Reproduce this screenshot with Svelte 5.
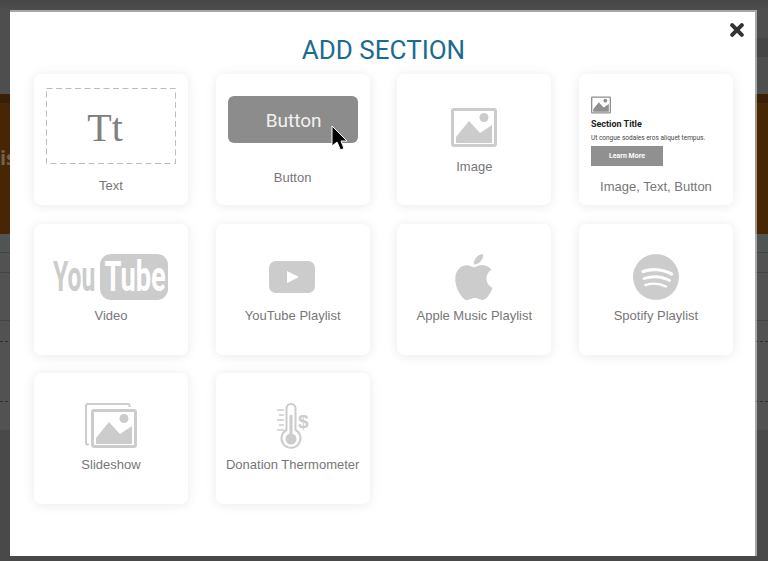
<script>
    const applePath =
        "M18.71 19.5C17.88 20.74 17 21.95 15.66 21.97C14.32 22 13.89 21.18 12.37 21.18C10.84 21.18 10.37 21.95 9.1 22C7.79 22.05 6.8 20.68 5.96 19.47C4.25 17 2.94 12.45 4.7 9.39C5.57 7.87 7.13 6.91 8.82 6.88C10.1 6.86 11.32 7.75 12.11 7.75C12.89 7.75 14.37 6.68 15.92 6.84C16.57 6.87 18.39 7.1 19.56 8.82C19.47 8.88 17.39 10.1 17.41 12.63C17.44 15.65 20.06 16.66 20.09 16.67C20.06 16.74 19.67 18.11 18.71 19.5M13 3.5C13.73 2.67 14.94 2.04 15.94 2C16.07 3.17 15.6 4.35 14.9 5.19C14.21 6.04 13.07 6.7 11.95 6.61C11.8 5.46 12.36 4.26 13 3.5Z";
</script>

{#snippet picture(color)}
    <rect x="1.5" y="1.5" width="43" height="36" rx="1.5" fill="none" stroke={color} stroke-width="3" />
    <path d="M5 35V29L18 13L29 25L41 17V35Z" fill={color} />
    <circle cx="33" cy="9.5" r="4.5" fill={color} />
{/snippet}

<div class="page">
    <div class="bg-top">
        <div class="bg-stripe"></div>
    </div>
    <div class="bg-hero">
        <div class="bg-hero-head"></div>
        <div class="bg-hero-text">is</div>
    </div>
    <div class="bg-rows">
        <div class="bg-row r1"></div>
        <div class="bg-row r2"></div>
        <div class="bg-row r3"></div>
        <div class="bg-row r4 dashed"></div>
        <div class="bg-row r5 dashed"></div>
        <div class="bg-row r6"></div>
    </div>
    <div class="bg-bottom"></div>

    <div class="modal">
        <button class="close" aria-label="Close">
            <svg width="14" height="14" viewBox="0 0 14 14">
                <path d="M2.2 2.2L11.8 11.8M11.8 2.2L2.2 11.8" stroke="#333" stroke-width="4" stroke-linecap="round" />
            </svg>
        </button>
        <h1>ADD SECTION</h1>

        <div class="grid">
            <div class="card">
                <div class="tt-box">
                    <svg class="dash" width="130" height="76" viewBox="0 0 130 76">
                        <rect x="0.5" y="0.5" width="129" height="75" fill="none" stroke="#bbb" stroke-width="1" stroke-dasharray="6 3.5" />
                    </svg>
                    Tt
                </div>
                <div class="label text-label">Text</div>
            </div>

            <div class="card">
                <div class="btn-preview">
                    <span>Button</span>
                    <svg class="cursor" width="17" height="26" viewBox="0 0 17 26">
                        <path d="M1 1V21L6 17L9.5 25L13 23.5L10 16H16Z" fill="#000" stroke="#fff" stroke-width="1" />
                    </svg>
                </div>
                <div class="label btn-label">Button</div>
            </div>

            <div class="card">
                <svg width="46" height="39" viewBox="0 0 46 39">
                    {@render picture("#ccc")}
                </svg>
                <div class="label image-label">Image</div>
            </div>

            <div class="card combo">
                <div class="combo-preview">
                    <svg width="20" height="18" viewBox="0 0 46 39">
                        {@render picture("#8f8f8f")}
                    </svg>
                    <div class="combo-title">Section Title</div>
                    <div class="combo-sub">Ut congue sodales eros aliquet tempus.</div>
                    <div class="combo-btn">Learn More</div>
                </div>
                <div class="label combo-label">Image, Text, Button</div>
            </div>

            <div class="card">
                <svg class="yt-logo" width="116" height="46" viewBox="0 0 116 46">
                    <text transform="translate(0 37) scale(.59 1)" class="yt-you">You</text>
                    <rect x="47" y="0" width="68" height="46" rx="11" fill="#ccc" />
                    <text transform="translate(51.5 37) scale(.65 1)" class="yt-tube">Tube</text>
                </svg>
                <div class="label">Video</div>
            </div>

            <div class="card">
                <div class="icon-slot">
                    <svg width="46" height="32" viewBox="0 0 46 32">
                        <rect width="46" height="32" rx="7" fill="#ccc" />
                        <path d="M18 10L30 16L18 22Z" fill="#fff" />
                    </svg>
                </div>
                <div class="label">YouTube Playlist</div>
            </div>

            <div class="card">
                <svg width="38" height="46" viewBox="3.9 2 16.2 20">
                    <path d={applePath} fill="#ccc" />
                </svg>
                <div class="label">Apple Music Playlist</div>
            </div>

            <div class="card">
                <svg width="46" height="46" viewBox="0 0 46 46">
                    <circle cx="23" cy="23" r="23" fill="#ccc" />
                    <path d="M10 17.5C18 14.5 30 15 38.5 20" stroke="#fff" stroke-width="3.2" stroke-linecap="round" fill="none" />
                    <path d="M11 24.5C19 22 29 22.5 36.5 26.5" stroke="#fff" stroke-width="2.8" stroke-linecap="round" fill="none" />
                    <path d="M12.5 31C19 29 27 29.5 33 32.5" stroke="#fff" stroke-width="2.4" stroke-linecap="round" fill="none" />
                </svg>
                <div class="label">Spotify Playlist</div>
            </div>

            <div class="card">
                <svg width="52" height="46" viewBox="0 0 52 46">
                    <path d="M4 41.5H2.5A1.5 1.5 0 0 1 1 40V2.5A1.5 1.5 0 0 1 2.5 1H43A1.5 1.5 0 0 1 44.5 2.5V4" fill="none" stroke="#ccc" stroke-width="2" />
                    <g transform="translate(6 6)">
                        {@render picture("#ccc")}
                    </g>
                </svg>
                <div class="label">Slideshow</div>
            </div>

            <div class="card">
                <svg width="32" height="46" viewBox="0 0 32 46">
                    <path d="M9.5 27V5.5a4.5 4.5 0 0 1 9 0V27a9.5 9.5 0 1 1-9 0Z" fill="none" stroke="#ccc" stroke-width="2" />
                    <rect x="12.5" y="12" width="3" height="20" fill="#ccc" />
                    <circle cx="14" cy="36" r="5.5" fill="#ccc" />
                    <path d="M0 7H7M2 12H7M0 17H7M2 22H7M0 27H7" stroke="#ccc" stroke-width="1.6" />
                    <text x="21" y="25" class="dollar">$</text>
                </svg>
                <div class="label">Donation Thermometer</div>
            </div>
        </div>
    </div>
</div>

<style>
    :global(body) {
        margin: 0;
        background: #4d4d4d;
    }

    .page {
        position: relative;
        width: 768px;
        height: 561px;
        overflow: hidden;
        background: #4d4d4d;
    }

    /* dimmed page behind the dialog */
    .bg-top {
        height: 94px;
        padding-top: 38px;
        box-sizing: border-box;
        background: linear-gradient(#464646 0, #4e4e4e 10px);
    }

    .bg-stripe {
        height: 19px;
        width: 14px;
        margin-left: auto;
        background: #454545;
    }

    .bg-hero {
        height: 140px;
        background: #472606;
        overflow: hidden;
    }

    .bg-hero-head {
        height: 9px;
        background: #3a1f07;
    }

    .bg-hero-text {
        margin-top: 42px;
        width: 10px;
        font: bold 20px/26px "Open Sans", sans-serif;
        color: #75604a;
        white-space: nowrap;
    }

    .bg-row {
        box-sizing: border-box;
        border-bottom: 1px solid #444;
        background: #525252;
    }

    .r1 { height: 19px; background: #505454; }
    .r2 { height: 20px; }
    .r3 { height: 48px; }
    .r4 { height: 21px; }
    .r5 { height: 60px; }
    .r6 { height: 28px; border-bottom: none; }

    .dashed {
        border-bottom: 1px dashed #2e2e2e;
    }

    .bg-bottom {
        height: 131px;
        background: #494949;
    }

    .modal {
        position: absolute;
        left: 10px;
        top: 10px;
        width: 747px;
        height: 546px;
        box-sizing: border-box;
        background: #fff;
        background-clip: padding-box;
        border-top: 2px solid rgba(255, 255, 255, 0.5);
        border-right: 2px solid rgba(255, 255, 255, 0.5);
        font-family: "Liberation Sans", Arial, sans-serif;
    }

    .close {
        position: absolute;
        top: 11px;
        right: 11px;
        padding: 0;
        display: flex;
        border: none;
        background: none;
    }

    h1 {
        margin: 0;
        padding: 22px 0 0 2px;
        height: 40px;
        text-align: center;
        font: 400 26px/32px Roboto, sans-serif;
        color: #1a6b92;
    }

    .grid {
        display: grid;
        grid-template-columns: repeat(4, 154px);
        grid-auto-rows: 131px;
        column-gap: 27.67px;
        row-gap: 18.5px;
        padding-left: 24px;
    }

    .card {
        display: flex;
        flex-direction: column;
        align-items: center;
        justify-content: center;
        box-sizing: border-box;
        border-radius: 7px;
        background: #fff;
        box-shadow: 0 1px 12px rgba(0, 0, 0, 0.09);
    }

    .card:nth-child(-n + 3) {
        padding-top: 3px;
    }

    .card:nth-child(n + 9) {
        padding-bottom: 2px;
    }

    .label {
        margin-top: 8px;
        font-size: 13px;
        line-height: 16px;
        color: #777;
        white-space: nowrap;
    }

    .icon-slot {
        height: 46px;
        display: flex;
        align-items: center;
        margin-right: 1px;
    }

    .tt-box {
        position: relative;
        width: 130px;
        height: 76px;
        box-sizing: border-box;
        display: flex;
        align-items: center;
        justify-content: center;
        padding: 2px 12px 0 0;
        font: 40px "Liberation Serif", serif;
        color: #808080;
    }

    .dash {
        position: absolute;
        left: 0;
        top: 0;
    }

    .text-label { margin-top: 14px; }

    .btn-preview {
        position: relative;
        width: 130px;
        height: 47px;
        box-sizing: border-box;
        padding: 2px 0 0 2px;
        display: flex;
        align-items: center;
        justify-content: center;
        border-radius: 6px;
        background: #8c8c8c;
        font: 19px Roboto, sans-serif;
        color: #f2f2f2;
    }

    .cursor {
        position: absolute;
        left: 103px;
        top: 29px;
    }

    .btn-label { margin-top: 27px; }
    .image-label { margin-top: 12px; }

    .combo {
        align-items: flex-start;
        padding: 22px 0 0 12px;
        justify-content: flex-start;
    }

    .combo-preview {
        display: flex;
        flex-direction: column;
        align-items: flex-start;
    }

    .combo-title {
        margin-top: 5px;
        font: 700 9px/11px Roboto, sans-serif;
        color: #222;
    }

    .combo-sub {
        margin-top: 4px;
        font: 400 6.5px/9px Roboto, sans-serif;
        color: #444;
        white-space: nowrap;
    }

    .combo-btn {
        margin-top: 3px;
        width: 72px;
        height: 20px;
        display: flex;
        align-items: center;
        justify-content: center;
        background: #909090;
        font: 700 7px Roboto, sans-serif;
        color: #fff;
    }

    .combo-label {
        align-self: center;
        margin: 13px 0 0 -12px;
    }

    .yt-logo {
        overflow: visible;
    }

    .yt-you,
    .yt-tube {
        font: 700 42px Roboto, sans-serif;
    }

    .yt-you { fill: #ccc; }
    .yt-tube { fill: #fff; }

    .dollar {
        font: 700 19px "Liberation Sans", sans-serif;
        fill: #ccc;
    }
</style>
